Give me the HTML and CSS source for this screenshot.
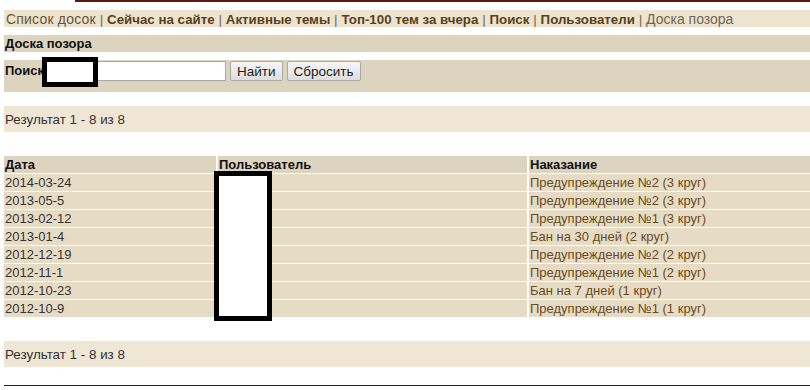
FILE: index.html
```html
<!DOCTYPE html>
<html lang="ru">
<head>
<meta charset="utf-8">
<title>Доска позора</title>
<link rel="stylesheet" href="styles.css">
</head>
<body>
<div class="topline"></div>
<div class="page">
  <div class="nav">
    <a class="nav-link plain" href="#">Список досок</a> | <a class="nav-link" href="#">Сейчас на сайте</a> | <a class="nav-link" href="#">Активные темы</a> | <a class="nav-link" href="#">Топ-100 тем за вчера</a> | <a class="nav-link" href="#">Поиск</a> | <a class="nav-link" href="#">Пользователи</a> | <span class="nav-current">Доска позора</span>
  </div>
  <div class="title-bar">Доска позора</div>
  <form class="search-bar">
    <label class="search-label">Поиск</label>
    <input class="search-input" type="text">
    <button class="btn" type="button">Найти</button>
    <button class="btn" type="button">Сбросить</button>
    <div class="redact redact-search"></div>
  </form>
  <div class="result-bar">Результат 1 - 8 из 8</div>
  <div class="table-wrap">
    <table class="shame">
      <thead>
        <tr><th class="c-date">Дата</th><th class="c-user">Пользователь</th><th class="c-pun">Наказание</th></tr>
      </thead>
      <tbody>
        <tr><td>2014-03-24</td><td></td><td><a href="#">Предупреждение №2 (3 круг)</a></td></tr>
        <tr><td>2013-05-5</td><td></td><td><a href="#">Предупреждение №2 (3 круг)</a></td></tr>
        <tr><td>2013-02-12</td><td></td><td><a href="#">Предупреждение №1 (3 круг)</a></td></tr>
        <tr><td>2013-01-4</td><td></td><td><a href="#">Бан на 30 дней (2 круг)</a></td></tr>
        <tr><td>2012-12-19</td><td></td><td><a href="#">Предупреждение №2 (2 круг)</a></td></tr>
        <tr><td>2012-11-1</td><td></td><td><a href="#">Предупреждение №1 (2 круг)</a></td></tr>
        <tr><td>2012-10-23</td><td></td><td><a href="#">Бан на 7 дней (1 круг)</a></td></tr>
        <tr><td>2012-10-9</td><td></td><td><a href="#">Предупреждение №1 (1 круг)</a></td></tr>
      </tbody>
    </table>
    <div class="redact redact-users"></div>
  </div>
  <div class="result-bar result-bottom">Результат 1 - 8 из 8</div>
  <div class="rule"></div>
</div>
</body>
</html>
```
FILE: styles.css
```css
html, body {
  margin: 0;
  padding: 0;
  background: #fff;
  overflow: hidden;
}
body {
  font-family: "Liberation Sans", Arial, sans-serif;
  font-size: 13px;
  color: #333;
}
.topline {
  height: 2px;
  margin-left: 75px;
  background: #5e1a0f;
}
.page {
  padding-left: 4px;
  margin-right: -10px;
}
.nav {
  margin-top: 8px;
  height: 17px;
  line-height: 18px;
  background: #ede4d0;
  padding-left: 2px;
  color: #7a6748;
  font-size: 13.7px;
  white-space: nowrap;
}
.nav-link {
  color: #5b3f1c;
  font-weight: bold;
  font-size: 13.3px;
  text-decoration: none;
}
.nav-link.plain {
  font-weight: normal;
  font-size: 14px;
  color: #6b5535;
  letter-spacing: 0.2px;
}
.nav-current {
  color: #6e6656;
  font-size: 14px;
}
.title-bar {
  margin-top: 8px;
  height: 17px;
  line-height: 17px;
  background: #ddd4c0;
  padding-left: 1px;
  font-weight: bold;
  color: #111;
}
.search-bar {
  position: relative;
  margin: 8px 0 0 0;
  height: 32px;
  box-sizing: border-box;
  padding: 1px 0 0 1px;
  background: #ddd4c0;
  display: flex;
  align-items: flex-start;
}
.search-label {
  font-weight: bold;
  color: #111;
  margin-right: 3px;
  line-height: 20px;
}
.search-input {
  box-sizing: border-box;
  width: 179px;
  height: 20px;
  margin: 0 4px 0 0;
  border: 1px solid #a8a8a8;
  background: #fff;
  padding: 0;
}
.btn {
  box-sizing: border-box;
  height: 20px;
  margin: 0 4px 0 0;
  padding: 0 6px;
  border: 1px solid #a9a9a9;
  border-radius: 2px;
  background: linear-gradient(#f6f6f6, #dedede);
  font-family: "Liberation Sans", Arial, sans-serif;
  font-size: 13.5px;
  color: #222;
}
.redact {
  position: absolute;
  box-sizing: border-box;
  border: 5px solid #000;
  background: #fff;
}
.redact-search {
  left: 38px;
  top: -3px;
  width: 56px;
  height: 30px;
}
.result-bar {
  margin-top: 14px;
  height: 26px;
  line-height: 27px;
  background: #efe6d5;
  padding-left: 1px;
  color: #333;
  font-size: 13.4px;
}
.table-wrap {
  position: relative;
  margin-top: 24px;
}
.shame {
  border-collapse: separate;
  border-spacing: 2px 1px;
  margin: -1px 0 0 -2px;
  width: 820px;
  table-layout: fixed;
}
.shame th, .shame td {
  height: 17px;
  padding: 0 0 0 1px;
  text-align: left;
  line-height: 17px;
  white-space: nowrap;
}
.shame th {
  background: #ddd4c0;
  color: #111;
  font-weight: bold;
}
.shame td {
  background: #e6dcc5;
  color: #333;
}
.shame td a {
  color: #6b4a1c;
  text-decoration: none;
}
.c-date { width: 211px; }
.c-user { width: 308px; }
.redact-users {
  left: 210px;
  top: 16px;
  width: 58px;
  height: 150px;
}
.result-bottom {
  margin-top: 23px;
}
.rule {
  margin-top: 18px;
  height: 1px;
  background: #222;
}
```
